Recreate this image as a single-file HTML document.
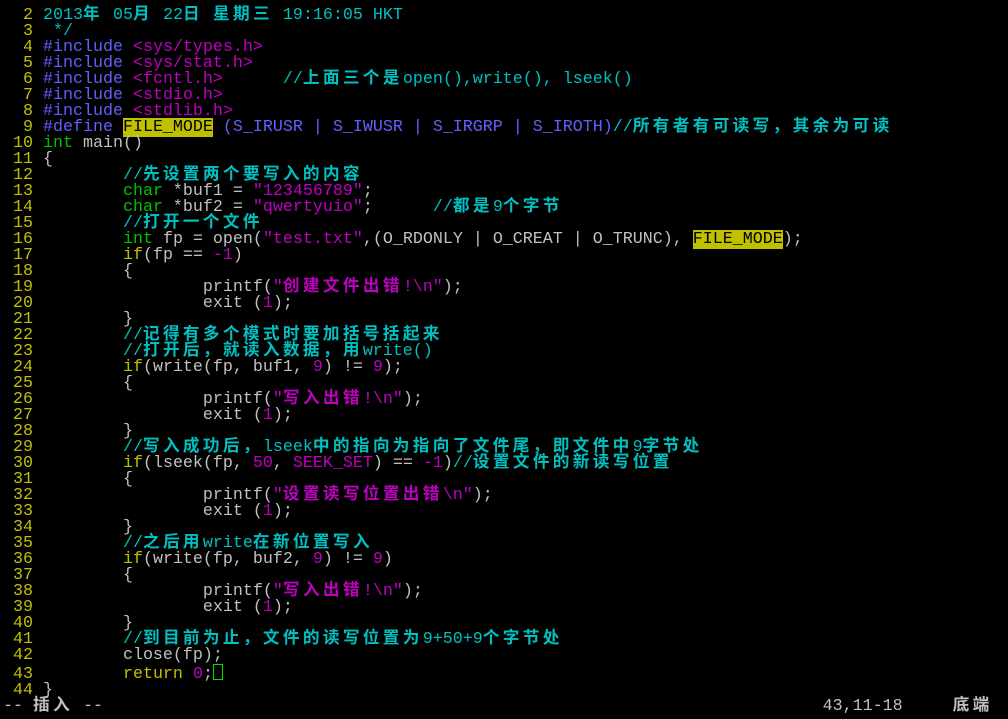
<!DOCTYPE html>
<html><head><meta charset="utf-8"><style>
html,body{margin:0;padding:0;background:#000;width:1008px;height:719px;overflow:hidden}
pre{margin:0;position:absolute;left:3px;top:8px;font-family:"Liberation Mono","Noto Sans CJK SC",monospace;font-size:16.67px;line-height:16px;color:#c0c0c0;white-space:pre}
.n{color:#c0c000}.p{color:#6060ff}.t{color:#00c000}.s{color:#c000c0}.m{color:#00c0c0}.y{color:#c0c000}
.h{background:#c0c000;color:#000}
.c{font-family:"Noto Sans CJK SC",sans-serif;letter-spacing:3.33px;font-weight:bold;line-height:1px}
.cur{display:inline-block;width:8px;height:14px;border:1px solid #00e000;vertical-align:-2px;line-height:1px}
</style></head><body><pre><span class="n">  2 </span><span class="m">2013<span class="c">年</span> 05<span class="c">月</span> 22<span class="c">日</span> <span class="c">星期三</span> 19:16:05 HKT</span>
<span class="n">  3 </span><span class="m"> */</span>
<span class="n">  4 </span><span class="p">#include </span><span class="s">&lt;sys/types.h&gt;</span>
<span class="n">  5 </span><span class="p">#include </span><span class="s">&lt;sys/stat.h&gt;</span>
<span class="n">  6 </span><span class="p">#include </span><span class="s">&lt;fcntl.h&gt;</span>      <span class="m">//<span class="c">上面三个是</span>open(),write(), lseek()</span>
<span class="n">  7 </span><span class="p">#include </span><span class="s">&lt;stdio.h&gt;</span>
<span class="n">  8 </span><span class="p">#include </span><span class="s">&lt;stdlib.h&gt;</span>
<span class="n">  9 </span><span class="p">#define </span><span class="h">FILE_MODE</span><span class="p"> (S_IRUSR | S_IWUSR | S_IRGRP | S_IROTH)</span><span class="m">//<span class="c">所有者有可读写，其余为可读</span></span>
<span class="n"> 10 </span><span class="t">int</span> main()
<span class="n"> 11 </span>{
<span class="n"> 12 </span>        <span class="m">//<span class="c">先设置两个要写入的内容</span></span>
<span class="n"> 13 </span>        <span class="t">char</span> *buf1 = <span class="s">"123456789"</span>;
<span class="n"> 14 </span>        <span class="t">char</span> *buf2 = <span class="s">"qwertyuio"</span>;      <span class="m">//<span class="c">都是</span>9<span class="c">个字节</span></span>
<span class="n"> 15 </span>        <span class="m">//<span class="c">打开一个文件</span></span>
<span class="n"> 16 </span>        <span class="t">int</span> fp = open(<span class="s">"test.txt"</span>,(O_RDONLY | O_CREAT | O_TRUNC), <span class="h">FILE_MODE</span>);
<span class="n"> 17 </span>        <span class="y">if</span>(fp == <span class="s">-1</span>)
<span class="n"> 18 </span>        {
<span class="n"> 19 </span>                printf(<span class="s">"<span class="c">创建文件出错</span>!\n"</span>);
<span class="n"> 20 </span>                exit (<span class="s">1</span>);
<span class="n"> 21 </span>        }
<span class="n"> 22 </span>        <span class="m">//<span class="c">记得有多个模式时要加括号括起来</span></span>
<span class="n"> 23 </span>        <span class="m">//<span class="c">打开后，就读入数据，用</span>write()</span>
<span class="n"> 24 </span>        <span class="y">if</span>(write(fp, buf1, <span class="s">9</span>) != <span class="s">9</span>);
<span class="n"> 25 </span>        {
<span class="n"> 26 </span>                printf(<span class="s">"<span class="c">写入出错</span>!\n"</span>);
<span class="n"> 27 </span>                exit (<span class="s">1</span>);
<span class="n"> 28 </span>        }
<span class="n"> 29 </span>        <span class="m">//<span class="c">写入成功后，</span>lseek<span class="c">中的指向为指向了文件尾，即文件中</span>9<span class="c">字节处</span></span>
<span class="n"> 30 </span>        <span class="y">if</span>(lseek(fp, <span class="s">50</span>, <span class="s">SEEK_SET</span>) == <span class="s">-1</span>)<span class="m">//<span class="c">设置文件的新读写位置</span></span>
<span class="n"> 31 </span>        {
<span class="n"> 32 </span>                printf(<span class="s">"<span class="c">设置读写位置出错</span>\n"</span>);
<span class="n"> 33 </span>                exit (<span class="s">1</span>);
<span class="n"> 34 </span>        }
<span class="n"> 35 </span>        <span class="m">//<span class="c">之后用</span>write<span class="c">在新位置写入</span></span>
<span class="n"> 36 </span>        <span class="y">if</span>(write(fp, buf2, <span class="s">9</span>) != <span class="s">9</span>)
<span class="n"> 37 </span>        {
<span class="n"> 38 </span>                printf(<span class="s">"<span class="c">写入出错</span>!\n"</span>);
<span class="n"> 39 </span>                exit (<span class="s">1</span>);
<span class="n"> 40 </span>        }
<span class="n"> 41 </span>        <span class="m">//<span class="c">到目前为止，文件的读写位置为</span>9+50+9<span class="c">个字节处</span></span>
<span class="n"> 42 </span>        close(fp);
<span class="n"> 43 </span>        <span class="y">return</span> <span class="s">0</span>;<span class="cur"></span>
<span class="n"> 44 </span>}
-- <span class="c">插入</span> --                                                                        43,11-18     <span class="c">底端</span></pre></body></html>
